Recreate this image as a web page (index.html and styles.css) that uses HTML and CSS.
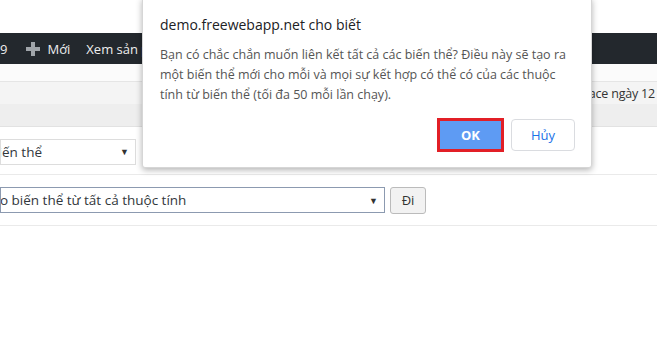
FILE: index.html
```html
<!DOCTYPE html>
<html lang="vi">
<head>
    <meta charset="UTF-8">
    <title>Biến thể</title>
    <link rel="stylesheet" href="styles.css">
</head>
<body>
    <div class="page">
        <div class="top-gap"></div>

        <div class="admin-bar">
            <span class="ab-item">9</span>
            <span class="ab-item ab-new">
                <svg class="plus" width="14" height="14" viewBox="0 0 14 14">
                    <rect x="5" y="0" width="4" height="14" fill="#a0a5aa"/>
                    <rect x="0" y="5" width="14" height="4" fill="#a0a5aa"/>
                </svg>
                Mới
            </span>
            <span class="ab-item">Xem sản phẩm</span>
        </div>

        <div class="notice-gap"></div>
        <div class="notice-bar">
            <span class="notice-text">Cập nhật từ Marketplace ngày 12</span>
        </div>
        <div class="sub-bar"></div>

        <div class="row row-first">
            <div class="select select-small">
                <span class="select-text">Thêm biến thể</span>
                <span class="caret">▼</span>
            </div>
        </div>

        <div class="row row-second">
            <div class="select select-wide">
                <span class="select-text">Tạo biến thể từ tất cả thuộc tính</span>
                <span class="caret">▼</span>
            </div>
            <button class="btn-go">Đi</button>
        </div>
    </div>

    <div class="dialog">
        <div class="dialog-title">demo.freewebapp.net cho biết</div>
        <p class="dialog-msg">Bạn có chắc chắn muốn liên kết tất cả các biến thể? Điều này sẽ tạo ra một biến thể mới cho mỗi và mọi sự kết hợp có thể có của các thuộc tính từ biến thể (tối đa 50 mỗi lần chạy).</p>
        <div class="dialog-actions">
            <span class="ok-ring"><button class="btn-ok">OK</button></span>
            <button class="btn-cancel">Hủy</button>
        </div>
    </div>
</body>
</html>
```

FILE: styles.css
```css
:root {
    --bar-dark: #23282d;
    --line: #e5e5e5;
    --field-border: #8c9ab0;
}

body {
    margin: 0;
    font-family: "Open Sans", "Noto Sans", sans-serif;
    background-color: #fff;
    overflow: hidden;
}

.page {
    width: 657px;
    height: 340px;
}

.top-gap {
    height: 33px;
    background-color: #fff;
}

/* admin bar */
.admin-bar {
    height: 31px;
    background-color: var(--bar-dark);
    color: #eee;
    font-size: 13px;
    display: flex;
    align-items: center;
    margin-left: -8px;
}

.ab-item {
    padding: 0 8px;
    display: flex;
    align-items: center;
    gap: 7px;
    white-space: nowrap;
}

.ab-new {
    padding-left: 11px;
    padding-right: 8px;
}

.notice-gap {
    height: 17px;
    background-color: #fbfbfb;
    border-bottom: 1px solid var(--line);
}

.notice-bar {
    height: 22px;
    background-color: #f4f4f4;
    display: flex;
    align-items: center;
    justify-content: flex-end;
    font-size: 12.5px;
    color: #333;
    overflow: hidden;
    white-space: nowrap;
}

.notice-text {
    margin-right: 2px;
    letter-spacing: -0.2px;
}

.sub-bar {
    height: 22px;
    background-color: #eeeeee;
    border-bottom: 1px solid #e2e2e2;
}

.row {
    display: flex;
    align-items: center;
    gap: 5px;
    border-bottom: 1px solid #eaeaea;
    font-size: 13.5px;
    color: #32373c;
}

.row-first {
    height: 47px;
}

.row-second {
    height: 50px;
}

.select {
    height: 26px;
    box-sizing: border-box;
    background-color: #fff;
    display: flex;
    align-items: center;
    justify-content: space-between;
    padding-right: 6px;
    white-space: nowrap;
    overflow: hidden;
}

.select-small {
    width: 136px;
    border: 1px solid #ddd;
    margin-top: 2px;
}

.select-small .select-text {
    margin-left: -50px;
}

.select-wide {
    width: 385px;
    border: 1px solid var(--field-border);
}

.select-wide .select-text {
    margin-left: -16px;
}

.caret {
    font-size: 9px;
    color: #333;
}

.btn-go {
    width: 36px;
    height: 27px;
    font-family: inherit;
    font-size: 13px;
    color: #333;
    background-color: #f2f2f2;
    border: 1px solid #bbb;
    border-radius: 3px;
}

/* browser confirm dialog, sits over the page */
.dialog {
    position: absolute;
    left: 142px;
    top: -2px;
    width: 450px;
    height: 170px;
    box-sizing: border-box;
    padding: 14px 17px 0 17px;
    background-color: #fff;
    border: 1px solid #d6d6d6;
    border-radius: 0 0 3px 3px;
    box-shadow: 0 2px 6px rgba(0, 0, 0, 0.3);
}

.dialog-title {
    font-size: 14px;
    color: #202124;
    line-height: 24px;
}

.dialog-msg {
    margin: 8px 0 0 0;
    font-size: 12.5px;
    line-height: 20px;
    color: #555;
}

.dialog-actions {
    display: flex;
    justify-content: flex-end;
    align-items: center;
    gap: 7px;
    margin-top: 13px;
    margin-right: -1px;
}

.ok-ring {
    display: flex;
    border: 3px solid #e21f26;
}

.btn-ok {
    width: 61px;
    height: 28px;
    border: none;
    background-color: #5e9bf3;
    color: #fff;
    font-family: inherit;
    font-weight: bold;
    font-size: 13px;
}

.btn-cancel {
    width: 64px;
    height: 32px;
    border: 1px solid #dadce0;
    border-radius: 4px;
    background-color: #fff;
    color: #1a73e8;
    font-family: inherit;
    font-size: 13px;
}
```
